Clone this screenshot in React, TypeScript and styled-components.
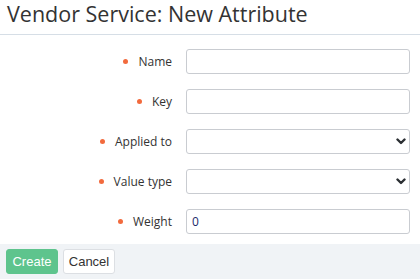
import React from 'react';
import styled, { createGlobalStyle } from 'styled-components';

const GlobalStyle = createGlobalStyle`
  html, body {
    margin: 0;
    padding: 0;
    background: #fff;
  }
  body {
    font-family: "Open Sans", "Liberation Sans", sans-serif;
    color: #333;
  }
`;

interface IField {
  label: string;
  kind: 'text' | 'select';
  value?: string;
}

const fields: IField[] = [
  { label: 'Name', kind: 'text' },
  { label: 'Key', kind: 'text' },
  { label: 'Applied to', kind: 'select' },
  { label: 'Value type', kind: 'select' },
  { label: 'Weight', kind: 'text', value: '0' },
];

function Chevron() {
  return (
    <svg width="10" height="7" viewBox="0 0 10 7">
      <polyline points="1.5,1.5 5,5 8.5,1.5" fill="none" stroke="#2b2f33" strokeWidth="2.4" strokeLinecap="round" strokeLinejoin="round" />
    </svg>
  );
}

export default function App() {
  return (
    <Page>
      <GlobalStyle />
      <Header>
        <Title>Vendor Service: New Attribute</Title>
      </Header>
      <Form>
        {fields.map((field) => (
          <React.Fragment key={field.label}>
            <Label>{field.label}</Label>
            {field.kind === 'select' ? (
              <SelectBox>
                <Chevron />
              </SelectBox>
            ) : (
              <Input>{field.value}</Input>
            )}
          </React.Fragment>
        ))}
      </Form>
      <Footer>
        <Button primary>Create</Button>
        <Button>Cancel</Button>
      </Footer>
    </Page>
  );
}

const Page = styled.div`
  width: 420px;
  height: 279px;
  display: flex;
  flex-direction: column;
  overflow: hidden;
`;

const Header = styled.div`
  height: 34px;
  border-bottom: 1px solid #d6dee6;
  padding: 0 7px;
  display: flex;
  align-items: center;
`;

const Title = styled.h1`
  margin: 0;
  font-size: 21.5px;
  font-weight: 400;
  color: #333;
  line-height: 28px;
  margin-top: -6px;
`;

const Form = styled.div`
  display: grid;
  grid-template-columns: 172px 1fr;
  column-gap: 14px;
  row-gap: 15px;
  padding: 14px 10px 0 0;
`;

const Label = styled.div`
  display: flex;
  align-items: center;
  justify-content: flex-end;
  font-size: 12px;
  color: #333;
  height: 25px;

  &::before {
    content: '';
    width: 5px;
    height: 5px;
    border-radius: 50%;
    background: #f26a3d;
    margin-right: 10px;
  }
`;

const Input = styled.div`
  box-sizing: border-box;
  height: 25px;
  border: 1px solid #c9ccd1;
  border-radius: 3px;
  padding: 0 5px;
  display: flex;
  align-items: center;
  font-size: 12px;
  color: #1c2a6b;
`;

const SelectBox = styled(Input)`
  justify-content: flex-end;
  padding: 0 3px 0 5px;
`;

const Footer = styled.div`
  margin-top: auto;
  height: 35px;
  background: #f0f3f6;
  display: flex;
  align-items: center;
  gap: 5px;
  padding: 0 6px;
`;

const Button = styled.div<{ primary?: boolean }>`
  box-sizing: border-box;
  height: 25px;
  width: 52px;
  border-radius: 3px;
  display: flex;
  align-items: center;
  justify-content: center;
  font-family: "Liberation Sans", Arial, sans-serif;
  font-size: 13px;
  background: ${({ primary }) => (primary ? '#5ec48d' : '#fff')};
  color: ${({ primary }) => (primary ? '#fff' : '#333')};
  border: 1px solid ${({ primary }) => (primary ? '#5ec48d' : '#dcdfe3')};
`;
